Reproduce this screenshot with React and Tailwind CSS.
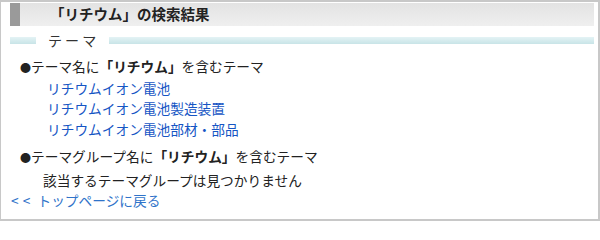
export default function App() {
  const themes = ['リチウムイオン電池', 'リチウムイオン電池製造装置', 'リチウムイオン電池部材・部品'];

  return (
    <div
      className="w-[600px] h-[221px] bg-white border-[#c8c8c8] border-t-2 border-r-2 border-b-2 border-l pl-[9px] pr-[4px] pt-px text-[#222]"
      style={{ fontFamily: '"Noto Sans CJK JP", "Noto Sans", sans-serif' }}
    >
      {/* title bar */}
      <div className="flex h-[23px]">
        <div className="w-[10px] bg-[#9a9a9a]" />
        <div className="flex-1 flex items-center pl-[30px] bg-linear-to-b from-[#e3e3e3] to-[#efefef]">
          <h1 className="text-[14.5px] font-bold leading-none text-[#222]">「リチウム」の検索結果</h1>
        </div>
      </div>

      {/* section heading */}
      <div className="flex items-center mt-[7px] h-[14px]">
        <div className="w-[26px] h-[7px] bg-linear-to-b from-[#e4f3f5] to-[#c8e4e7]" />
        <span className="pl-[12px] pr-[10px] text-[14px] leading-none tracking-[0.22em] text-[#333]">テーマ</span>
        <div className="flex-1 h-[7px] bg-linear-to-b from-[#e4f3f5] to-[#c8e4e7]" />
      </div>

      <div className="mt-[9px] text-[13.7px] leading-[20.5px]">
        <p className="pl-[10px]">
          <span className="text-[11px]">●</span>テーマ名に<b>「リチウム」</b>を含むテーマ
        </p>
        <ul className="pl-[37px]">
          {themes.map((t) => (
            <li key={t}>
              <a href="#" className="text-[#1555c4]">{t}</a>
            </li>
          ))}
        </ul>

        <p className="pl-[10px] mt-[7px]">
          <span className="text-[11px]">●</span>テーマグループ名に<b>「リチウム」</b>を含むテーマ
        </p>
        <p className="pl-[33px] mt-[2px]">該当するテーマグループは見つかりません</p>
        <a href="#" className="block pl-px text-[#2f73c9]">
          <span className="tracking-[0.3em]">&lt;&lt;</span> トップページに戻る
        </a>
      </div>
    </div>
  );
}
